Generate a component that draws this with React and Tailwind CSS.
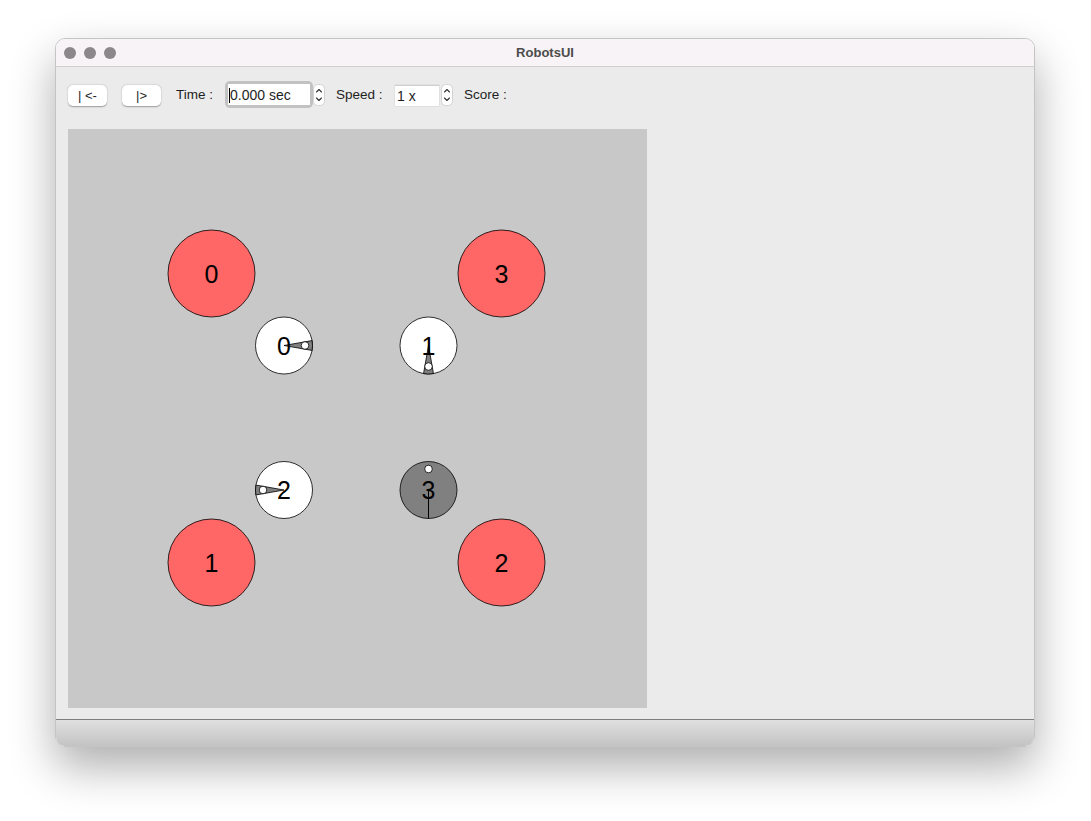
import React from "react";

const FONT = { fontFamily: '"Liberation Sans", Arial, sans-serif' };

// goals (red) and robots, in field coordinates (579 x 579)
const GOALS = [
  { id: 0, x: 143.5, y: 144.5 },
  { id: 3, x: 433.5, y: 144.5 },
  { id: 1, x: 143.5, y: 433.5 },
  { id: 2, x: 433.5, y: 433.5 },
];

const ROBOTS = [
  { id: 0, x: 216, y: 216.5, angle: 0, fill: "#ffffff", wedge: true },
  { id: 1, x: 360.5, y: 216.5, angle: 90, fill: "#ffffff", wedge: true },
  { id: 2, x: 216, y: 361, angle: 180, fill: "#ffffff", wedge: true },
  { id: 3, x: 360.5, y: 361, angle: -90, fill: "#808080", wedge: false },
];

const R = 28.5;

const sector = (cx, cy, r, a, h) => {
  const rad = (d) => (d * Math.PI) / 180;
  const x1 = cx + r * Math.cos(rad(a - h));
  const y1 = cy + r * Math.sin(rad(a - h));
  const x2 = cx + r * Math.cos(rad(a + h));
  const y2 = cy + r * Math.sin(rad(a + h));
  return `M ${cx} ${cy} L ${x1} ${y1} A ${r} ${r} 0 0 1 ${x2} ${y2} Z`;
};

const Stepper = () => (
  <svg width="12" height="22" viewBox="0 0 12 22">
    <rect x="0.5" y="0.5" width="11" height="21" rx="4" fill="#ffffff" stroke="#d2d2d2" />
    <path d="M3.5 8 L6 5.5 L8.5 8" fill="none" stroke="#333" strokeWidth="1.1" strokeLinecap="round" strokeLinejoin="round" />
    <path d="M3.5 14 L6 16.5 L8.5 14" fill="none" stroke="#333" strokeWidth="1.1" strokeLinecap="round" strokeLinejoin="round" />
  </svg>
);

const Field = () => (
  <svg width="579" height="579" viewBox="0 0 579 579" style={FONT}>
    <rect width="579" height="579" fill="#c8c8c8" />
    {GOALS.map((g) => (
      <g key={`g${g.id}`}>
        <circle cx={g.x} cy={g.y} r="43.5" fill="#ff6666" stroke="#000" strokeWidth="0.8" />
        <text x={g.x} y={g.y + 9} textAnchor="middle" fontSize="25" fill="#000">{g.id}</text>
      </g>
    ))}
    {ROBOTS.map((r) => {
      const rad = (r.angle * Math.PI) / 180;
      const dx = r.x + 21 * Math.cos(rad);
      const dy = r.y + 21 * Math.sin(rad);
      return (
        <g key={`r${r.id}`}>
          <circle cx={r.x} cy={r.y} r={R} fill={r.fill} stroke="#000" strokeWidth="0.8" />
          {r.wedge ? (
            <path d={sector(r.x, r.y, R, r.angle, 10)} fill="#808080" stroke="#000" strokeWidth="0.8" />
          ) : (
            <line x1={r.x} y1={r.y} x2={r.x} y2={r.y + R} stroke="#000" strokeWidth="1" />
          )}
          <text x={r.x} y={r.y + 9} textAnchor="middle" fontSize="25" fill="#000">{r.id}</text>
          <circle cx={dx} cy={dy} r="3.8" fill="#fff" stroke="#000" strokeWidth="0.8" />
        </g>
      );
    })}
  </svg>
);

const Button = ({ children, className = "" }) => (
  <div className={`w-[39px] h-[21px] flex items-center justify-center bg-white rounded-[5px] shadow-[0_0.5px_1.5px_rgba(0,0,0,0.35)] text-[13px] text-[#262626] ${className}`}>
    {children}
  </div>
);

export default function App() {
  return (
    <div className="w-[1091px] h-[821px] bg-white pl-[55px] pt-[38px]" style={FONT}>
      <div className="w-[980px] h-[709px] rounded-[10px] overflow-hidden flex flex-col border border-[#c4c4c4] shadow-[0_20px_45px_rgba(0,0,0,0.32)]">
        {/* Title bar */}
        <div className="relative h-[28px] shrink-0 bg-[#f7f3f6] border-b border-[#d0d0d0] flex items-center">
          <div className="flex gap-[8px] pl-[8px]">
            <div className="w-[12px] h-[12px] rounded-full bg-[#8c878b]" />
            <div className="w-[12px] h-[12px] rounded-full bg-[#8c878b]" />
            <div className="w-[12px] h-[12px] rounded-full bg-[#8c878b]" />
          </div>
          <div className="absolute inset-0 flex items-center justify-center text-[13px] font-bold text-[#4c4c4c]">
            RobotsUI
          </div>
        </div>

        {/* Content */}
        <div className="flex-1 bg-[#ebebeb] flex flex-col">
          <div className="h-[27px] mt-[14px] flex items-center text-[13.5px] text-[#1e1e1e]">
            <Button className="ml-[12px] mt-[2px]">| &lt;-</Button>
            <Button className="ml-[15px] mt-[2px]">|&gt;</Button>
            <div className="ml-[15px] w-[49px] mt-[2px]">Time :</div>
            <div className="w-[88px] h-[27px] rounded-[5px] bg-[#c2c2c2] p-[3px]">
              <div className="w-full h-full bg-white flex items-center pl-[1px] pt-[1px] text-[14px]">
                <span className="w-px h-[15px] bg-black" />
                <span>0.000 sec</span>
              </div>
            </div>
            <div className="mt-[1px]"><Stepper /></div>
            <div className="ml-[11px] w-[59px] mt-[2px]">Speed :</div>
            <div className="w-[44px] h-[21px] bg-white border-t border-[#cfcfcf] shadow-[0_0_0_0.5px_#d6d6d6] flex items-center pl-[2px] mt-[2px] text-[14px]">
              1 x
            </div>
            <div className="ml-[2px] mt-[1px]"><Stepper /></div>
            <div className="ml-[11px] mt-[2px]">Score :</div>
          </div>

          <div className="mt-[21px] ml-[12px]">
            <Field />
          </div>
        </div>

        {/* Bottom bar */}
        <div className="h-[27px] shrink-0 border-t border-[#7e7e7e] bg-gradient-to-b from-[#e0e0e0] to-[#c3c3c3]" />
      </div>
    </div>
  );
}
